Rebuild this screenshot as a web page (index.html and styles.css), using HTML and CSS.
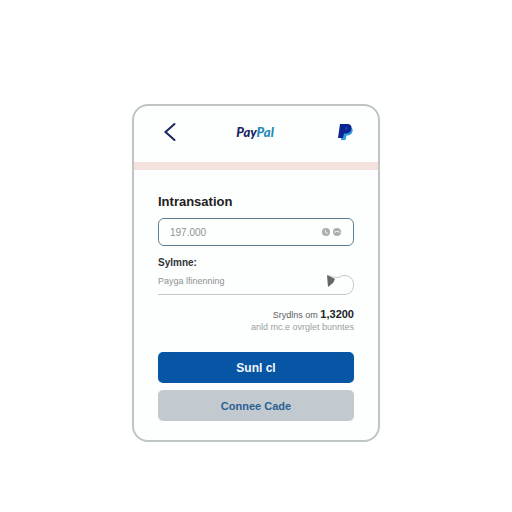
FILE: index.html
```html
<!DOCTYPE html>
<html lang="en">

<head>
    <meta charset="utf-8">
    <meta name="viewport" content="width=device-width, initial-scale=1">
    <title>PayPal</title>
    <link rel="stylesheet" href="styles.css">
</head>

<body>
    <main class="card">
        <header class="card-header">
            <button class="icon-button" type="button" aria-label="Back">
                <svg width="14" height="20" viewBox="0 0 14 20">
                    <path d="M12.5 2 L3.5 10 L12.5 18" fill="none" stroke="#1b2560" stroke-width="2" stroke-linecap="round" />
                </svg>
            </button>
            <div class="brand">Pay<span class="brand-light">Pal</span></div>
            <svg class="logo" width="16" height="18" viewBox="0 0 16 18">
                <path d="M4 4 H12 Q15.500 5 14.500 8.500 Q13.500 12 10 12.500 H8.500 L7.500 17 H3 Z" fill="#2c9be0" />
                <path d="M2 1 H10 Q14 1.500 13.500 5.500 Q12.500 10.500 8 10.500 H6 L5 15 H0 Z" fill="#0b2390" />
                <path d="M7.500 4 H9 Q10.500 4.500 9.500 6 Q9 7 7 7 Z" fill="#1747ad" />
            </svg>
        </header>

        <form class="card-body">
            <label class="title" for="amount">Intransation</label>
            <div class="amount-box">
                <input id="amount" class="amount-input" type="text" value="197.000">
                <svg width="20" height="8" viewBox="0 0 20 8">
                    <circle cx="4" cy="4" r="4" fill="#aaaeaf" />
                    <path d="M3.500 2 V5 H6" fill="none" stroke="#e6e9e9" />
                    <circle cx="15" cy="4" r="4" fill="#aaaeaf" />
                    <path d="M13 5 V3.500 H17 V5" fill="none" stroke="#e6e9e9" />
                </svg>
            </div>

            <label class="label" for="source">Sylmne:</label>
            <div class="source-row">
                <input id="source" class="source-input" type="text" value="Payga lfinenning">
                <button class="icon-button" type="button" aria-label="Choose">
                    <svg width="30" height="21" viewBox="0 0 30 21">
                        <path d="M4 1.500 Q10 4 15 3.500 Q17 1.500 20 1.500 C26 1.500 29.500 5 29.500 11 C29.500 17 26 20.500 20 20.500 H0" fill="none" stroke="#c6c9cb" />
                        <path d="M3 1 L11 5 L9 9 L4 13 Z" fill="#626668" />
                    </svg>
                </button>
            </div>

            <div class="note">
                <div class="note-total">Srydlns om <strong>1,3200</strong></div>
                <div class="note-small">anld mc.e ovrglet bunntes</div>
            </div>

            <button class="button button-primary" type="button">Sunl cl</button>
            <button class="button button-secondary" type="button">Connee Cade</button>
        </form>
    </main>
</body>

</html>
```

FILE: styles.css
```css
* {
    box-sizing: border-box;
}

body {
    margin: 0;
    padding: 104px 16px 16px;
    background-color: #ffffff;
    font-family: "Liberation Sans", Arial, sans-serif;
}

.card {
    max-width: 248px;
    margin: 0 auto;
    border: 2px solid #bfc5c7;
    border-radius: 16px;
    background-color: #fdfefe;
    overflow: hidden;
}

/* Header */

.card-header {
    display: flex;
    align-items: center;
    justify-content: space-between;
    padding: 16px 24px 20px 28px;
    border-bottom: 8px solid #f5e1dd;
}

.icon-button {
    display: block;
    padding: 0;
    border: none;
    background: none;
    cursor: pointer;
}

.icon-button svg {
    display: block;
}

.brand {
    margin-right: 4px;
    font-family: Lato, "Liberation Sans", sans-serif;
    font-size: 13px;
    line-height: 20px;
    font-weight: 900;
    font-style: italic;
    color: #1b2365;
}

.brand-light {
    color: #2588b8;
}

/* Form */

.card-body {
    display: flex;
    flex-direction: column;
    padding: 24px 24px 19px;
}

.title {
    margin-bottom: 8px;
    font-size: 13px;
    line-height: 16px;
    font-weight: bold;
    color: #1d2022;
}

.amount-box {
    display: flex;
    align-items: center;
    height: 28px;
    margin-bottom: 10px;
    padding: 0 11px;
    border: 1px solid #587f89;
    border-radius: 6px;
}

.amount-input,
.source-input {
    flex: 1;
    min-width: 0;
    padding: 0;
    border: none;
    outline: none;
    background: none;
    font-family: inherit;
    font-size: 10px;
    color: #8d9193;
}

.label {
    margin-bottom: 4px;
    font-size: 10px;
    line-height: 14px;
    font-weight: bold;
    color: #303335;
}

.source-row {
    display: flex;
    margin-bottom: 13px;
}

.source-input {
    padding-bottom: 7px;
    border-bottom: 1px solid #c6c9cb;
    font-size: 9px;
}

.note {
    margin-bottom: 19px;
    text-align: right;
    font-size: 9px;
    line-height: 12px;
    color: #5c6063;
}

.note-total strong {
    font-size: 11px;
    color: #222527;
}

.note-small {
    color: #9a9fa2;
}

/* Buttons */

.button {
    height: 31px;
    padding: 0;
    border: none;
    border-radius: 5px;
    font-family: inherit;
    font-weight: bold;
    cursor: pointer;
}

.button-primary {
    margin-bottom: 7px;
    background-color: #0755a5;
    font-size: 12px;
    color: #f4f8fc;
}

.button-secondary {
    background-color: #c2cacf;
    font-size: 11px;
    color: #2a6094;
}
```
